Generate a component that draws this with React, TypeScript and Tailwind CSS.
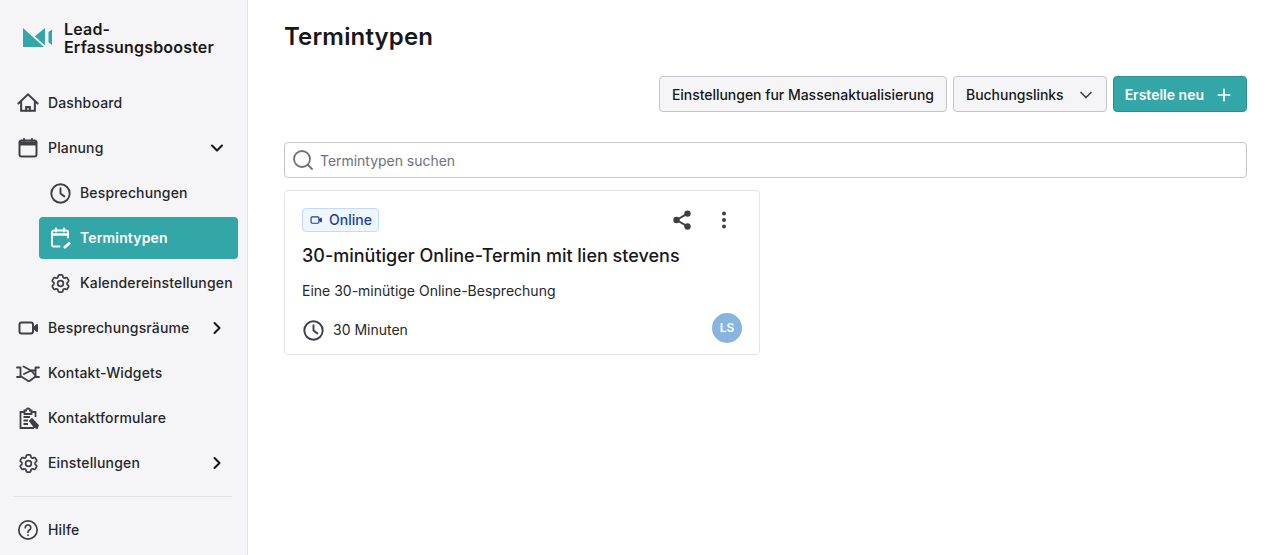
import React from "react";
import { ChevronDown, ChevronRight, Plus, Search, EllipsisVertical } from "lucide-react";
import { HiOutlineCog6Tooth } from "react-icons/hi2";

const Clock = ({ className = "" }: { className?: string }) => (
  <svg viewBox="0 0 24 24" className={className} fill="none" stroke="currentColor" strokeWidth="2" strokeLinecap="round" strokeLinejoin="round">
    <circle cx="12" cy="12" r="9.6" />
    <path d="M12 6.500V12l4 3" />
  </svg>
);
const Home = () => (
  <svg viewBox="0 0 24 24" className="h-[22px] w-[22px]" fill="none" stroke="#3f3f46" strokeWidth="2.200" strokeLinejoin="miter" strokeLinecap="round">
    <path d="M1.500 12.500 12 2.500l10.500 10" />
    <path d="M4.500 10.500v10h15v-10" />
    <path d="M10 20.500v-4h4v4" />
  </svg>
);
const Calendar = () => (
  <svg viewBox="0 0 24 24" className="h-6 w-6" fill="none" stroke="#3f3f46" strokeWidth="2" strokeLinejoin="round" strokeLinecap="round">
    <rect x="3.500" y="4.500" width="17" height="16" rx="2" />
    <path d="M3.500 7.500h17" strokeWidth="4" strokeLinecap="butt" />
    <path d="M8 3v2M16 3v2" />
  </svg>
);
const CalendarEdit = () => (
  <svg viewBox="0 0 24 24" className="h-6 w-6" fill="none" stroke="#fff" strokeWidth="2" strokeLinejoin="round" strokeLinecap="round">
    <path d="M11.500 20.500H6a2 2 0 0 1-2-2V6.500a2 2 0 0 1 2-2h12a2 2 0 0 1 2 2v5" />
    <path d="M4 8.500h16" strokeWidth="2.500" strokeLinecap="butt" />
    <path d="M8 2.500v3M16 2.500v3" />
    <path d="M16 22l6-5.500" strokeWidth="3" strokeLinecap="butt" />
  </svg>
);
const Gear = () => <HiOutlineCog6Tooth className="h-[23px] w-[23px] text-[#3f3f46]" style={{ strokeWidth: 1.8 }} />;
const Video = ({ className = "", color = "#3f3f46" }: { className?: string; color?: string }) => (
  <svg viewBox="0 0 24 24" className={className} fill="none" stroke={color} strokeWidth="2" strokeLinejoin="round">
    <rect x="3.500" y="6.500" width="13.500" height="11" rx="2" />
    <path d="M17.500 12l3.500-3v6z" fill={color} />
  </svg>
);
const Handshake = () => (
  <svg viewBox="0 0 24 18" className="h-[18px] w-6 shrink-0" fill="none" stroke="#3f3f46" strokeWidth="1.800" strokeLinejoin="round" strokeLinecap="round">
    <path d="M1 3.500h3.500V13H1M23 3.500h-3.500V13H23" />
    <path d="M4.500 12l8.500 5.500 6.500-5" />
    <path d="M7.500 2.500 15 6.500h4.500" />
    <path d="M8 10l7-3.500 4.500 5" />
  </svg>
);
const Clipboard = () => (
  <svg viewBox="0 0 24 24" className="h-6 w-6" fill="none" stroke="#3f3f46" strokeWidth="1.800" strokeLinejoin="miter" strokeLinecap="butt">
    <path d="M8 6H4.500v16H18" />
    <path d="M8.500 8V4.500h1.500a2 2 0 0 1 4 0h1.500V8z" />
    <path d="M16 6h3.500v5" />
    <path d="M7.500 11H14M7.500 14.500H12M7.500 18H12" />
    <path d="M14 15l2-2 6 6.500-1 2.500-2.500-1z" fill="#3f3f46" />
  </svg>
);
const Help = () => (
  <svg viewBox="0 0 24 24" className="h-[22px] w-[22px]" fill="none" stroke="#3f3f46" strokeWidth="1.900" strokeLinecap="round" strokeLinejoin="round">
    <circle cx="12" cy="12" r="10" />
    <path d="M9 9.500a3 3 0 1 1 4.500 2.600c-1 .6-1.500 1.200-1.500 2.400" />
    <path d="M12 17.500v.2" />
  </svg>
);
const Share = () => (
  <svg viewBox="0 0 24 24" className="h-[22px] w-[22px]" fill="#3f3f46" stroke="#3f3f46" strokeWidth="2">
    <circle cx="18" cy="5" r="2.500" />
    <circle cx="6" cy="12" r="2.500" />
    <circle cx="18" cy="19" r="2.500" />
    <path d="M18 5 6 12l12 7" fill="none" />
  </svg>
);
const Logo = () => (
  <svg viewBox="0 0 30 20" className="h-5 w-[30px] shrink-0" fill="#33a6a8">
    <path d="M0 0 21 19H0z" />
    <path d="M22 0v17.500L11.800 8.300z" />
    <path d="M25.500 4 29 1.500v15.500l-3.500-2.500z" />
  </svg>
);

function NavItem({ icon, label, chevron, sub, active }: { icon: React.ReactNode; label: string; chevron?: "down" | "right"; sub?: boolean; active?: boolean }) {
  return (
    <div className={`flex h-[42px] items-center rounded mb-[3px] ${sub ? "ml-[39px] w-[199px] pl-[9px]" : "ml-[16px] w-[217px]"} ${active ? "bg-[#33a6a8] text-white font-semibold" : "text-[#27272a] font-medium"}`}>
      <span className="mr-[8px] flex h-6 w-6 shrink-0 items-center justify-center">{icon}</span>
      <span className="whitespace-nowrap text-sm leading-5 tracking-[0.15px]">{label}</span>
      {chevron === "down" && <ChevronDown className="ml-auto mr-[6px] h-5 w-5 text-[#18181b]" strokeWidth={2.5} />}
      {chevron === "right" && <ChevronRight className="ml-auto mr-[6px] h-5 w-5 text-[#18181b]" strokeWidth={2.5} />}
    </div>
  );
}

export default function App() {
  return (
    <div className="flex h-[555px] w-full overflow-hidden bg-white font-['Inter',sans-serif] text-[#18181b]">
      <aside className="flex w-[248px] shrink-0 flex-col border-r border-[#e4e4e7] bg-[#f5f5f8]">
        <div className="flex items-center pl-[23px] pt-[20px] pb-[26px]">
          <Logo />
          <div className="ml-[11px] text-base font-semibold leading-[18px] tracking-[0.18px] text-[#18181b]">Lead-<br />Erfassungsbooster</div>
        </div>
        <nav className="flex flex-col">
          <NavItem icon={<Home />} label="Dashboard" />
          <NavItem icon={<Calendar />} label="Planung" chevron="down" />
          <NavItem sub icon={<Clock className="h-[23px] w-[23px] text-[#3f3f46]" />} label="Besprechungen" />
          <NavItem sub active icon={<CalendarEdit />} label="Termintypen" />
          <NavItem sub icon={<Gear />} label="Kalendereinstellungen" />
          <NavItem icon={<Video className="h-6 w-6" />} label="Besprechungsräume" chevron="right" />
          <NavItem icon={<Handshake />} label="Kontakt-Widgets" />
          <NavItem icon={<Clipboard />} label="Kontaktformulare" />
          <NavItem icon={<Gear />} label="Einstellungen" chevron="right" />
        </nav>
        <div className="ml-[13px] mt-[9px] w-[219px] border-t border-[#e4e4e7]" />
        <div className="mt-[12px]">
          <NavItem icon={<Help />} label="Hilfe" />
        </div>
      </aside>
      <main className="flex min-w-0 flex-1 flex-col pl-[36px] pr-[31px]">
        <h1 className="pt-[22px] text-2xl font-semibold leading-[30px] tracking-[0.15px] text-[#18181b]">Termintypen</h1>
        <div className="mt-[24px] flex justify-end gap-[6px]">
          <button className="flex h-9 items-center rounded border border-[#c4c4c8] bg-[#f5f5f8] px-3 pt-px text-sm font-medium tracking-[-0.03px] text-[#18181b]">Einstellungen fur Massenaktualisierung</button>
          <button className="flex h-9 items-center rounded border border-[#c4c4c8] bg-[#f5f5f8] pl-3 pr-[10px] pt-px text-sm font-medium tracking-[-0.03px] text-[#18181b]">
            Buchungslinks
            <ChevronDown className="ml-3 h-5 w-5 text-[#3f3f46]" strokeWidth={2} />
          </button>
          <button className="flex h-9 items-center rounded border border-[#2b8f91] bg-[#33a6a8] pl-[11px] pr-[12px] pt-px text-sm font-semibold text-white">
            Erstelle neu
            <Plus className="ml-[10px] h-5 w-5" strokeWidth={2} />
          </button>
        </div>
        <div className="mt-[30px] flex h-9 items-center rounded border border-[#c4c4c8] bg-white pl-[6px]">
          <Search className="h-6 w-6 text-[#71717a]" strokeWidth={1.8} />
          <span className="ml-[5px] pt-px text-sm tracking-[-0.03px] text-[#71717a]">Termintypen suchen</span>
        </div>
        <div className="mt-3 flex h-[165px] w-[476px] flex-col rounded border border-[#e4e4e7] bg-white pl-[17px] pr-[17px]">
          <div className="mt-[17px] flex h-6 items-center justify-between">
            <span className="flex h-6 items-center rounded border border-[#bfdbfe] bg-[#eff6ff] pl-[6px] pr-[6px] text-sm font-medium text-[#1e3f94]">
              <Video className="mr-[6px] h-[14px] w-[14px]" color="#1e3f94" />
              Online
            </span>
            <div className="flex items-center">
              <Share />
              <EllipsisVertical className="ml-[20px] mr-[7px] h-[22px] w-[22px] text-[#3f3f46]" strokeWidth={2.4} />
            </div>
          </div>
          <div className="mt-[12px] text-lg font-medium leading-6 text-[#18181b]">30-minütiger Online-Termin mit lien stevens</div>
          <div className="mt-[13px] text-sm leading-5 text-[#27272a]">Eine 30-minütige Online-Besprechung</div>
          <div className="mt-auto mb-[11px] flex items-center justify-between">
            <div className="flex items-center text-sm text-[#27272a]">
              <Clock className="mr-[8px] h-[23px] w-[23px] translate-y-[2px] text-[#3f3f46]" />
              <span className="translate-y-[2px]">30 Minuten</span>
            </div>
            <span className="flex h-[30px] w-[30px] items-center justify-center rounded-full bg-[#88b4de] text-xs font-semibold text-white">LS</span>
          </div>
        </div>
      </main>
    </div>
  );
}
